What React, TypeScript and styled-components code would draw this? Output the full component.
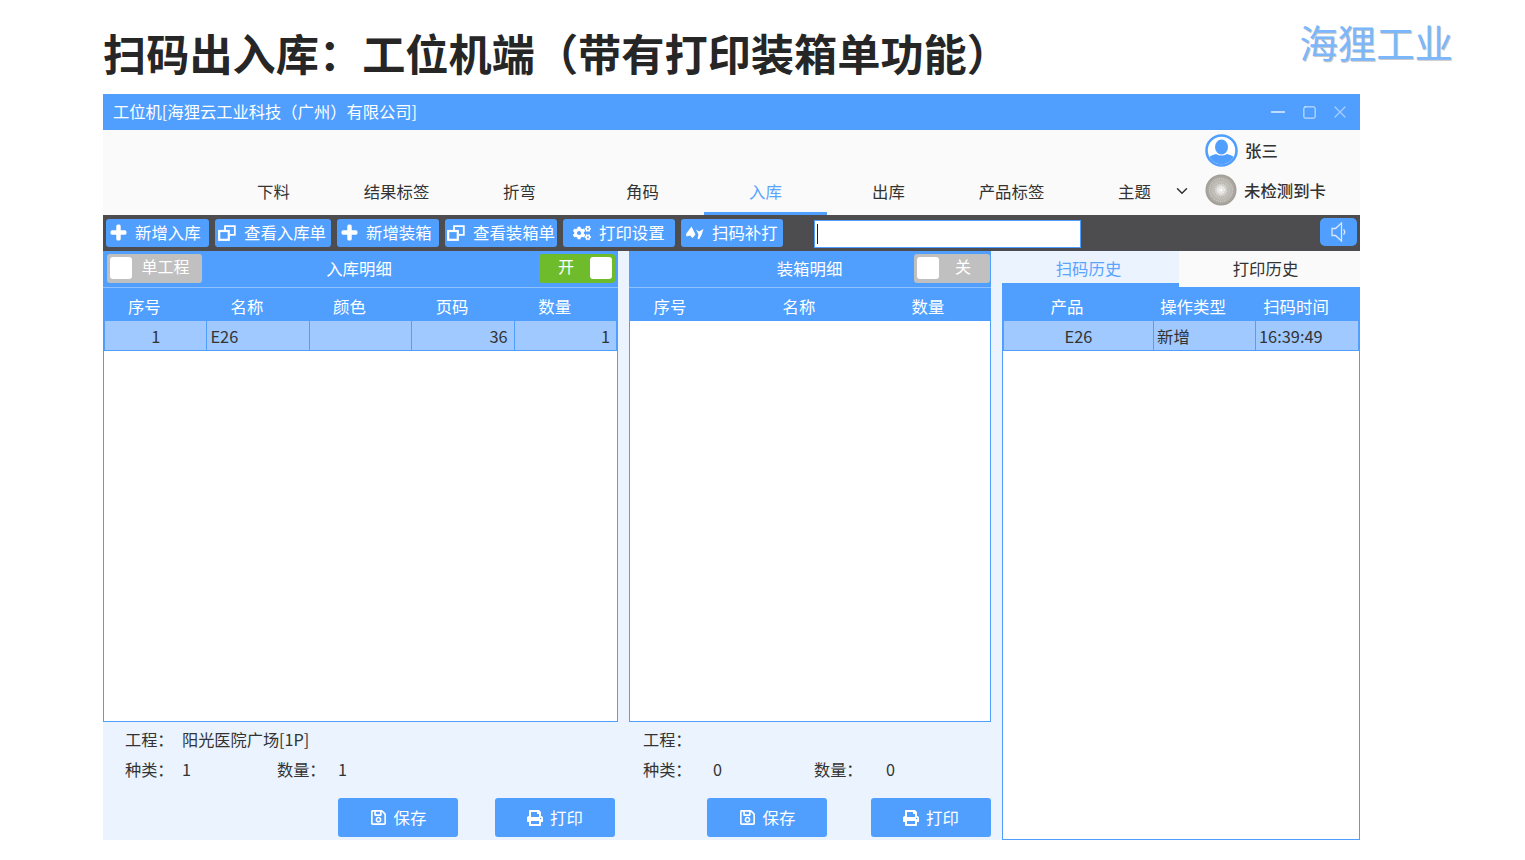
import React from "react";
import styled, { createGlobalStyle } from "styled-components";
import { FaCogs, FaPlus, FaPrint, FaRegSave } from "react-icons/fa";
import { FiChevronDown, FiMinus, FiSquare, FiX } from "react-icons/fi";

const blue = "#509fff";
const pale = "#eaf3fe";
const font = `"Noto Sans CJK SC", "Noto Sans", sans-serif`;

const GlobalStyle = createGlobalStyle`
  html, body {
    margin: 0;
    background: #fff;
    font-family: ${font};
    color: #333;
  }
  * { box-sizing: border-box; }
`;

const Page = styled.div`
  width: 1525px;
  height: 860px;
  padding-left: 103px;
  overflow: hidden;
`;

const Heading = styled.header`
  height: 94px;
  display: flex;
  justify-content: space-between;
  padding-right: 72px;
`;

const PageTitle = styled.h1`
  margin: 19px 0 0;
  font-size: 43.2px;
  line-height: 66px;
  height: 66px;
  font-weight: 700;
  color: #262626;
  white-space: nowrap;
`;

const Brand = styled.div`
  margin-top: 15px;
  font-size: 38.4px;
  line-height: 52px;
  height: 52px;
  font-weight: 400;
  color: #7db7fb;
  text-shadow: 1px 1px 0 #c9c9c9;
`;

const AppWindow = styled.main`
  width: 1257px;
  height: 746px;
  display: flex;
  flex-direction: column;
`;

const TitleBar = styled.div`
  height: 36px;
  background: ${blue};
  display: flex;
  align-items: center;
  justify-content: space-between;
  padding: 0 10px 0 10px;
  color: #fff;
  font-size: 16.3px;
  > span { padding-bottom: 2px; }
`;

const WindowControls = styled.div`
  display: flex;
  align-items: center;
  gap: 13px;
  color: #e4efff;
  svg { display: block; stroke-width: 1.5; }
  svg:last-child { color: #a8cdff; }
`;

const MenuArea = styled.nav`
  height: 85px;
  background: #fafafa;
  display: flex;
  align-items: flex-end;
  padding-left: 109px;
`;

const Tab = styled.div<{ $active?: boolean }>`
  width: 123px;
  height: 46px;
  padding-top: 2px;
  text-align: center;
  line-height: 40px;
  font-size: 16.4px;
  color: ${(p) => (p.$active ? "#5aa4ff" : "#333")};
  border-bottom: 3px solid ${(p) => (p.$active ? blue : "transparent")};
`;

const ThemeChevron = styled.div`
  height: 46px;
  width: 36px;
  display: flex;
  align-items: center;
  justify-content: center;
  padding-bottom: 3px;
  margin-left: -32px;
  font-size: 18px;
  color: #333;
`;

const UserBlock = styled.div`
  align-self: stretch;
  margin-left: 5px;
  padding-top: 3px;
  display: flex;
  flex-direction: column;
  gap: 6px;
`;

const UserRow = styled.div`
  height: 34px;
  display: flex;
  align-items: center;
  gap: 7px;
  font-size: 16.4px;
  font-weight: 500;
  color: #333;
  svg { display: block; flex: none; }
`;

const UserName = styled.span`
  padding-bottom: 1px;
`;

const Toolbar = styled.div`
  height: 36px;
  background: #4d4d50;
  display: flex;
  align-items: center;
  padding-left: 3px;
  gap: 6px;
`;

const ToolButton = styled.button<{ $width: number; $indent: number }>`
  width: ${(p) => p.$width}px;
  height: 28px;
  padding: 0 0 1px ${(p) => p.$indent}px;
  border: 0;
  border-radius: 3px;
  background: ${blue};
  color: #fff;
  font: 16.4px/27px ${font};
  display: flex;
  align-items: center;
  gap: 8px;
  white-space: nowrap;
  svg { flex: none; }
`;

const BoldPlus = styled(FaPlus)`
  stroke: currentColor;
  stroke-width: 36;
`;

const ScanInput = styled.div`
  width: 267px;
  height: 28px;
  margin: 2px 0 0 25px;
  background: #fff;
  border: 1px solid ${blue};
  position: relative;
  &::before {
    content: "";
    position: absolute;
    left: 2px;
    top: 3px;
    bottom: 3px;
    width: 1px;
    background: #222;
  }
`;

const SpeakerButton = styled.button`
  width: 37px;
  height: 28px;
  margin: 0 3px 2px auto;
  border: 0;
  border-radius: 5px;
  background: ${blue};
  color: #d9e9ff;
  padding: 0;
  display: flex;
  align-items: center;
  justify-content: center;
`;

const Workspace = styled.div`
  flex: 1;
  min-height: 0;
  background: ${pale};
  display: flex;
`;

const Section = styled.section<{ $width: number; $gap?: number }>`
  width: ${(p) => p.$width}px;
  margin-right: ${(p) => p.$gap ?? 0}px;
  display: flex;
  flex-direction: column;
`;

const SectionHeader = styled.div<{ $right: number }>`
  height: 37px;
  background: ${blue};
  border-bottom: 1px solid #8fc0ff;
  display: grid;
  grid-template-columns: 1fr auto 1fr;
  align-items: center;
  color: #fff;
  font-size: 16.4px;
  padding: 0 ${(p) => p.$right}px 2px 4px;
`;

const SectionTitle = styled.span`
  padding-right: 4px;
`;

const Toggle = styled.div<{ $on?: boolean; $width: number; $end?: boolean }>`
  width: ${(p) => p.$width}px;
  height: 29px;
  border-radius: 3px;
  background: ${(p) => (p.$on ? "#6ebc2c" : "#c0c0c0")};
  color: #fff;
  font-size: 16px;
  display: flex;
  align-items: center;
  flex-direction: ${(p) => (p.$on ? "row-reverse" : "row")};
  padding: 0 3px;
  justify-self: ${(p) => (p.$end ? "end" : "start")};
`;

const Knob = styled.span`
  width: 22px;
  height: 22px;
  border-radius: 3px;
  background: #fff;
  flex: none;
`;

const ToggleText = styled.span`
  flex: 1;
  text-align: center;
  line-height: 24px;
  padding-bottom: 4px;
`;

const Table = styled.div`
  height: 434px;
  background: #fff;
  border: 1px solid ${blue};
  border-top: 0;
  display: flex;
  flex-direction: column;
`;

const HeadRow = styled.div<{ $cols: string }>`
  height: 33px;
  flex: none;
  background: ${blue};
  display: grid;
  grid-template-columns: ${(p) => p.$cols};
  align-items: center;
  padding-top: 2px;
`;

const HeadCell = styled.div`
  padding-right: 22px;
  text-align: center;
  color: #fff;
  font-size: 16.4px;
`;

const DataRow = styled.div<{ $cols: string }>`
  height: 30px;
  flex: none;
  background: #9fc9ff;
  border-bottom: 1px solid ${blue};
  border-right: 1px solid ${blue};
  display: grid;
  grid-template-columns: ${(p) => p.$cols};
`;

const Cell = styled.div<{ $align?: string }>`
  padding: ${(p) => (p.$align === "center" ? "0" : "0 6px 0 3px")};
  border-left: 1px solid ${blue};
  line-height: 30px;
  font-size: 16.4px;
  color: #333;
  white-space: nowrap;
  text-align: ${(p) => p.$align ?? "left"};
`;

const Summary = styled.div`
  flex: 1;
  display: flex;
  flex-direction: column;
  padding-top: 2px;
  font-size: 16.2px;
  color: #333;
`;

const SummaryRow = styled.div<{ $cols: string; $left: number }>`
  height: 30px;
  display: grid;
  grid-template-columns: ${(p) => p.$cols};
  padding-left: ${(p) => p.$left}px;
  line-height: 30px;
  white-space: nowrap;
`;

const Actions = styled.div<{ $gap: number; $right: number }>`
  margin-top: 14px;
  display: flex;
  justify-content: flex-end;
  gap: ${(p) => p.$gap}px;
  padding-right: ${(p) => p.$right}px;
`;

const ActionButton = styled.button`
  width: 120px;
  height: 39px;
  border: 0;
  border-radius: 3px;
  background: ${blue};
  color: #fff;
  font: 16.4px/39px ${font};
  display: flex;
  align-items: center;
  justify-content: center;
  gap: 7px;
`;

const HistoryTabs = styled.div`
  height: 37px;
  flex: none;
  background: ${blue};
  display: flex;
`;

const HistoryTab = styled.div<{ $active?: boolean }>`
  flex: ${(p) => (p.$active ? "0 0 177px" : 1)};
  height: ${(p) => (p.$active ? 32 : 36)}px;
  padding-right: ${(p) => (p.$active ? 4 : 8)}px;
  background: ${(p) => (p.$active ? pale : "#fafafa")};
  color: ${(p) => (p.$active ? "#5aa4ff" : "#333")};
  text-align: center;
  font-size: 16.4px;
  line-height: 35px;
`;

const HistoryTable = styled(Table)`
  height: auto;
  flex: 1;
`;

const RestoreIcon = () => (
  <svg width="18" height="16" viewBox="0 0 18 16" fill="none" stroke="#fff">
    <path d="M7 5 V1.2 H16.8 V9.8 H12" strokeWidth="1.8" />
    <rect x="1.2" y="6" width="9.6" height="8.8" strokeWidth="2.2" />
  </svg>
);

const ScanIcon = () => (
  <svg width="18" height="14" viewBox="0 0 18 14" fill="#fff">
    <path d="M5.5 0.5 L9.5 8.5 L6.5 12 L4 9.5 L0.5 10.5 L0 8 Z" />
    <path d="M10 3.5 L13 5.5 L17.5 3 L15.5 9 L13 13.5 L11.5 12.5 L12.5 8.5 Z" />
  </svg>
);

const SpeakerIcon = () => (
  <svg width="16" height="20" viewBox="0 0 16 20" fill="none" stroke="currentColor" strokeWidth="1.3">
    <path d="M1 6.5 H4.5 L10.5 1 V19 L4.5 13.5 H1 Z" />
    <path d="M12.5 7.5 Q15 10 12.5 12.5" />
  </svg>
);

const Avatar = () => (
  <svg width="33" height="33" viewBox="0 0 33 33">
    <circle cx="16.5" cy="16.5" r="15" fill="#fff" stroke={blue} strokeWidth="2.6" />
    <clipPath id="avatar-clip">
      <circle cx="16.5" cy="16.5" r="13.7" />
    </clipPath>
    <g clipPath="url(#avatar-clip)" fill={blue}>
      <ellipse cx="16.5" cy="13" rx="6.5" ry="7.5" />
      <path d="M3 33 V25 Q4 21.5 11 20 Q16.5 23 22 20 Q29 21.5 30 25 V33 Z" />
    </g>
  </svg>
);

const Reader = () => (
  <svg width="32" height="32" viewBox="0 0 32 32">
    <defs>
      <radialGradient id="reader-glow">
        <stop offset="0" stopColor="#fff" />
        <stop offset="0.22" stopColor="#dddbd7" />
        <stop offset="0.6" stopColor="#bdbab4" />
        <stop offset="1" stopColor="#9f9b94" />
      </radialGradient>
    </defs>
    <circle cx="16" cy="16" r="15.5" fill="url(#reader-glow)" />
    <circle cx="16" cy="16" r="11.5" fill="none" stroke="#d8d6d2" strokeWidth="1" strokeDasharray="1 1" />
    <circle cx="16" cy="16" r="7" fill="none" stroke="#a9a69f" strokeWidth="1" strokeDasharray="1 1" />
    <circle cx="16" cy="16" r="3.5" fill="none" stroke="#fff" strokeWidth="1" strokeDasharray="1 1" />
  </svg>
);

const menuItems = ["下料", "结果标签", "折弯", "角码", "入库", "出库", "产品标签", "主题"];

const tools = [
  { label: "新增入库", width: 103, indent: 4, icon: <BoldPlus size={17} /> },
  { label: "查看入库单", width: 116, indent: 3, icon: <RestoreIcon /> },
  { label: "新增装箱", width: 102, indent: 4, icon: <BoldPlus size={17} /> },
  { label: "查看装箱单", width: 112, indent: 2, icon: <RestoreIcon /> },
  { label: "打印设置", width: 112, indent: 10, icon: <FaCogs size={18} /> },
  { label: "扫码补打", width: 102, indent: 5, icon: <ScanIcon /> },
];

const inCols = "repeat(5, 1fr)";
const boxCols = "102px 156px 102px";
const historyCols = "150px 102px 1fr";

const Footer = ({ cols, left, gap, right, name, kinds, count }: {
  cols: string;
  left: number;
  gap: number;
  right: number;
  name: string;
  kinds: number;
  count: number;
}) => (
  <Summary>
    <SummaryRow $cols={cols} $left={left}>
      <span>工程：</span>
      <span>{name}</span>
    </SummaryRow>
    <SummaryRow $cols={cols} $left={left}>
      <span>种类：</span>
      <span>{kinds}</span>
      <span>数量：</span>
      <span>{count}</span>
    </SummaryRow>
    <Actions $gap={gap} $right={right}>
      <ActionButton>
        <FaRegSave size={17} />
        保存
      </ActionButton>
      <ActionButton>
        <FaPrint size={16} />
        打印
      </ActionButton>
    </Actions>
  </Summary>
);

export default function App() {
  return (
    <>
      <GlobalStyle />
      <Page>
        <Heading>
          <PageTitle>扫码出入库：工位机端（带有打印装箱单功能）</PageTitle>
          <Brand>海狸工业</Brand>
        </Heading>
        <AppWindow>
          <TitleBar>
            <span>工位机[海狸云工业科技（广州）有限公司]</span>
            <WindowControls>
              <FiMinus size={22} />
              <FiSquare size={15} />
              <FiX size={20} />
            </WindowControls>
          </TitleBar>
          <MenuArea>
            {menuItems.map((item) => (
              <Tab key={item} $active={item === "入库"}>
                {item}
              </Tab>
            ))}
            <ThemeChevron>
              <FiChevronDown />
            </ThemeChevron>
            <UserBlock>
              <UserRow>
                <Avatar />
                <UserName>张三</UserName>
              </UserRow>
              <UserRow>
                <Reader />
                <UserName>未检测到卡</UserName>
              </UserRow>
            </UserBlock>
          </MenuArea>
          <Toolbar>
            {tools.map((t) => (
              <ToolButton key={t.label} $width={t.width} $indent={t.indent}>
                {t.icon}
                {t.label}
              </ToolButton>
            ))}
            <ScanInput />
            <SpeakerButton>
              <SpeakerIcon />
            </SpeakerButton>
          </Toolbar>
          <Workspace>
            <Section $width={515} $gap={11}>
              <SectionHeader $right={3}>
                <Toggle $width={95}>
                  <Knob />
                  <ToggleText>单工程</ToggleText>
                </Toggle>
                <SectionTitle>入库明细</SectionTitle>
                <Toggle $on $end $width={76}>
                  <Knob />
                  <ToggleText>开</ToggleText>
                </Toggle>
              </SectionHeader>
              <Table>
                <HeadRow $cols={inCols}>
                  {["序号", "名称", "颜色", "页码", "数量"].map((h) => (
                    <HeadCell key={h}>{h}</HeadCell>
                  ))}
                </HeadRow>
                <DataRow $cols={inCols}>
                  <Cell $align="center">1</Cell>
                  <Cell>E26</Cell>
                  <Cell />
                  <Cell $align="right">36</Cell>
                  <Cell $align="right">1</Cell>
                </DataRow>
              </Table>
              <Footer cols="57px 95px 61px 1fr" left={22} gap={37} right={3} name="阳光医院广场[1P]" kinds={1} count={1} />
            </Section>
            <Section $width={362} $gap={11}>
              <SectionHeader $right={1}>
                <span />
                <SectionTitle>装箱明细</SectionTitle>
                <Toggle $end $width={76}>
                  <Knob />
                  <ToggleText>关</ToggleText>
                </Toggle>
              </SectionHeader>
              <Table>
                <HeadRow $cols={boxCols}>
                  {["序号", "名称", "数量"].map((h) => (
                    <HeadCell key={h}>{h}</HeadCell>
                  ))}
                </HeadRow>
              </Table>
              <Footer cols="70px 101px 72px 1fr" left={14} gap={44} right={0} name="" kinds={0} count={0} />
            </Section>
            <Section $width={358}>
              <HistoryTabs>
                <HistoryTab $active>扫码历史</HistoryTab>
                <HistoryTab>打印历史</HistoryTab>
              </HistoryTabs>
              <HistoryTable>
                <HeadRow $cols={historyCols}>
                  {["产品", "操作类型", "扫码时间"].map((h) => (
                    <HeadCell key={h}>{h}</HeadCell>
                  ))}
                </HeadRow>
                <DataRow $cols={historyCols}>
                  <Cell $align="center">E26</Cell>
                  <Cell>新增</Cell>
                  <Cell>16:39:49</Cell>
                </DataRow>
              </HistoryTable>
            </Section>
          </Workspace>
        </AppWindow>
      </Page>
    </>
  );
}
